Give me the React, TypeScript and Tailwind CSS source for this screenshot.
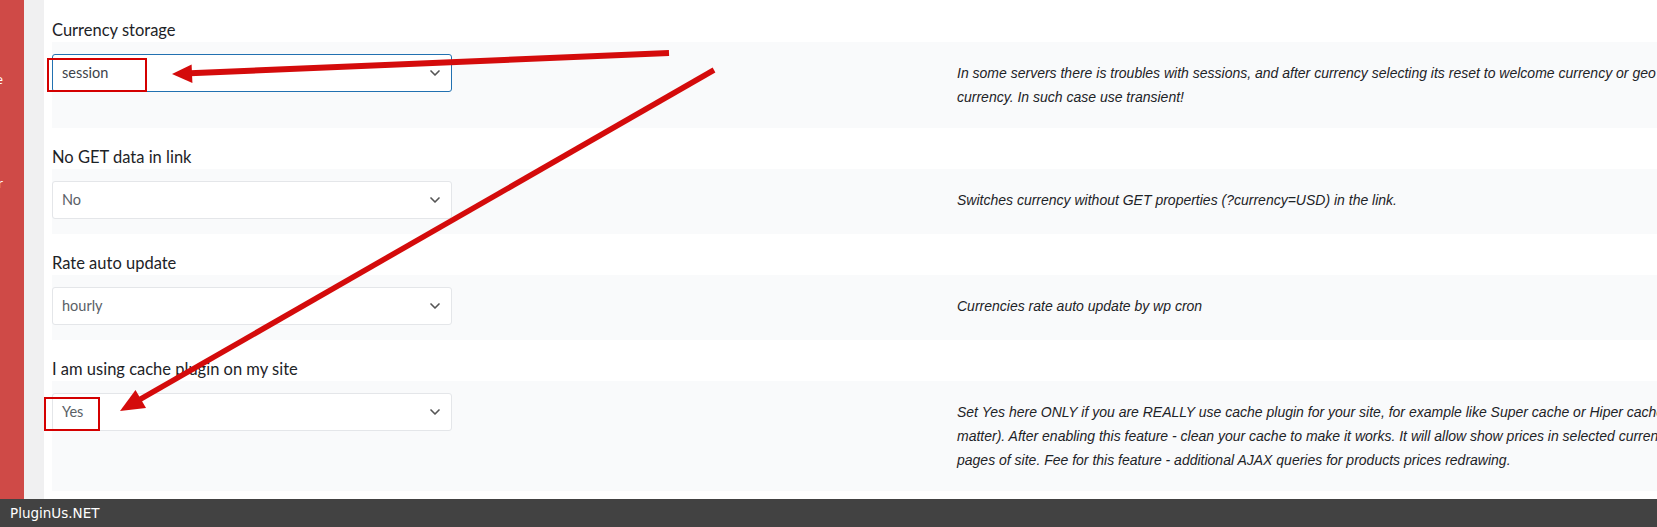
import { ChevronDown } from "lucide-react";

type Row = {
    label: string;
    value: string;
    focused?: boolean;
    desc: string[];
};

const rows: Row[] = [
    {
        label: "Currency storage",
        value: "session",
        focused: true,
        desc: [
            "In some servers there is troubles with sessions, and after currency selecting its reset to welcome currency or geo ip",
            "currency. In such case use transient!",
        ],
    },
    {
        label: "No GET data in link",
        value: "No",
        desc: ["Switches currency without GET properties (?currency=USD) in the link."],
    },
    {
        label: "Rate auto update",
        value: "hourly",
        desc: ["Currencies rate auto update by wp cron"],
    },
    {
        label: "I am using cache plugin on my site",
        value: "Yes",
        desc: [
            "Set Yes here ONLY if you are REALLY use cache plugin for your site, for example like Super cache or Hiper cache (doesn't",
            "matter). After enabling this feature - clean your cache to make it works. It will allow show prices in selected currency on all",
            "pages of site. Fee for this feature - additional AJAX queries for products prices redrawing.",
        ],
    },
];

const SelectBox = ({ value, focused }: { value: string; focused?: boolean }) => (
    <div
        className={`flex h-[38px] w-[400px] items-center justify-between rounded-[3px] border bg-white pl-[9px] pr-[8px] text-[14.5px] ${
            focused ? "border-[#2271b1] text-[#3c434a]" : "border-[#e4e6e9] text-[#5a6066]"
        }`}
    >
        <span>{value}</span>
        <ChevronDown size={16} strokeWidth={2.5} className="text-[#555]" />
    </div>
);

const Arrows = () => (
    <svg
        className="pointer-events-none absolute left-0 top-0"
        width="1657"
        height="499"
        viewBox="0 0 1657 499"
    >
        {/* annotation boxes */}
        <rect x="48" y="59" width="98" height="32" fill="none" stroke="#d40000" strokeWidth="2" />
        <rect x="45" y="398" width="54" height="32" fill="none" stroke="#d40000" strokeWidth="2" />

        {/* arrow to session */}
        <line x1="669" y1="53" x2="190" y2="73.2" stroke="#d40b0b" strokeWidth="6" />
        <polygon points="172,74 192.4,83 191.6,64.5" fill="#d40b0b" />

        {/* arrow to Yes */}
        <line x1="714" y1="70" x2="140" y2="399.4" stroke="#d40b0b" strokeWidth="5.5" />
        <polygon points="120,411 146,408 135.5,390" fill="#d40b0b" />
    </svg>
);

export default function App() {
    return (
        <div className="flex h-[527px] w-full flex-col overflow-hidden bg-white font-['Lato',sans-serif]">
            <div className="relative flex min-h-0 flex-1">
                <aside className="w-[24px] shrink-0 overflow-hidden bg-[#cf4a47] font-['Open_Sans',sans-serif] text-[13px] leading-[18px] text-white">
                    <div className="ml-[-200px] w-[203px] text-right">
                        <div className="mt-[70px] whitespace-nowrap">Welcome Cache</div>
                        <div className="mt-[86px] whitespace-nowrap">Side switcher</div>
                    </div>
                </aside>
                <div className="w-[20px] shrink-0 bg-[#f0f0f1]" />

                <main className="min-w-0 flex-1 overflow-hidden pl-2 pt-[18px]">
                    {rows.map((row, index) => (
                        <section key={index} className={index === 0 ? "" : "mt-[17px]"}>
                            <p className="text-[16.5px] leading-6 text-[#1d2327]">{row.label}</p>
                            <div className="flex bg-[#f9fafb]">
                                <div className="w-[893px] shrink-0 pb-[15px] pt-3">
                                    <SelectBox value={row.value} focused={row.focused} />
                                </div>
                                <div className="py-[19px] pl-3">
                                    <p className="whitespace-nowrap font-['Liberation_Sans',Arial,sans-serif] text-[14px] italic leading-6 text-[#1d2327]">
                                        {row.desc.map((line, i) => (
                                            <span key={i} className="block">
                                                {line}
                                            </span>
                                        ))}
                                    </p>
                                </div>
                            </div>
                        </section>
                    ))}
                </main>

                <Arrows />
            </div>

            <footer className="flex h-[28px] shrink-0 items-center bg-[#424242] pl-[10px] font-['DejaVu_Sans',sans-serif] text-[13.5px] text-white">
                PluginUs.NET
            </footer>
        </div>
    );
}
